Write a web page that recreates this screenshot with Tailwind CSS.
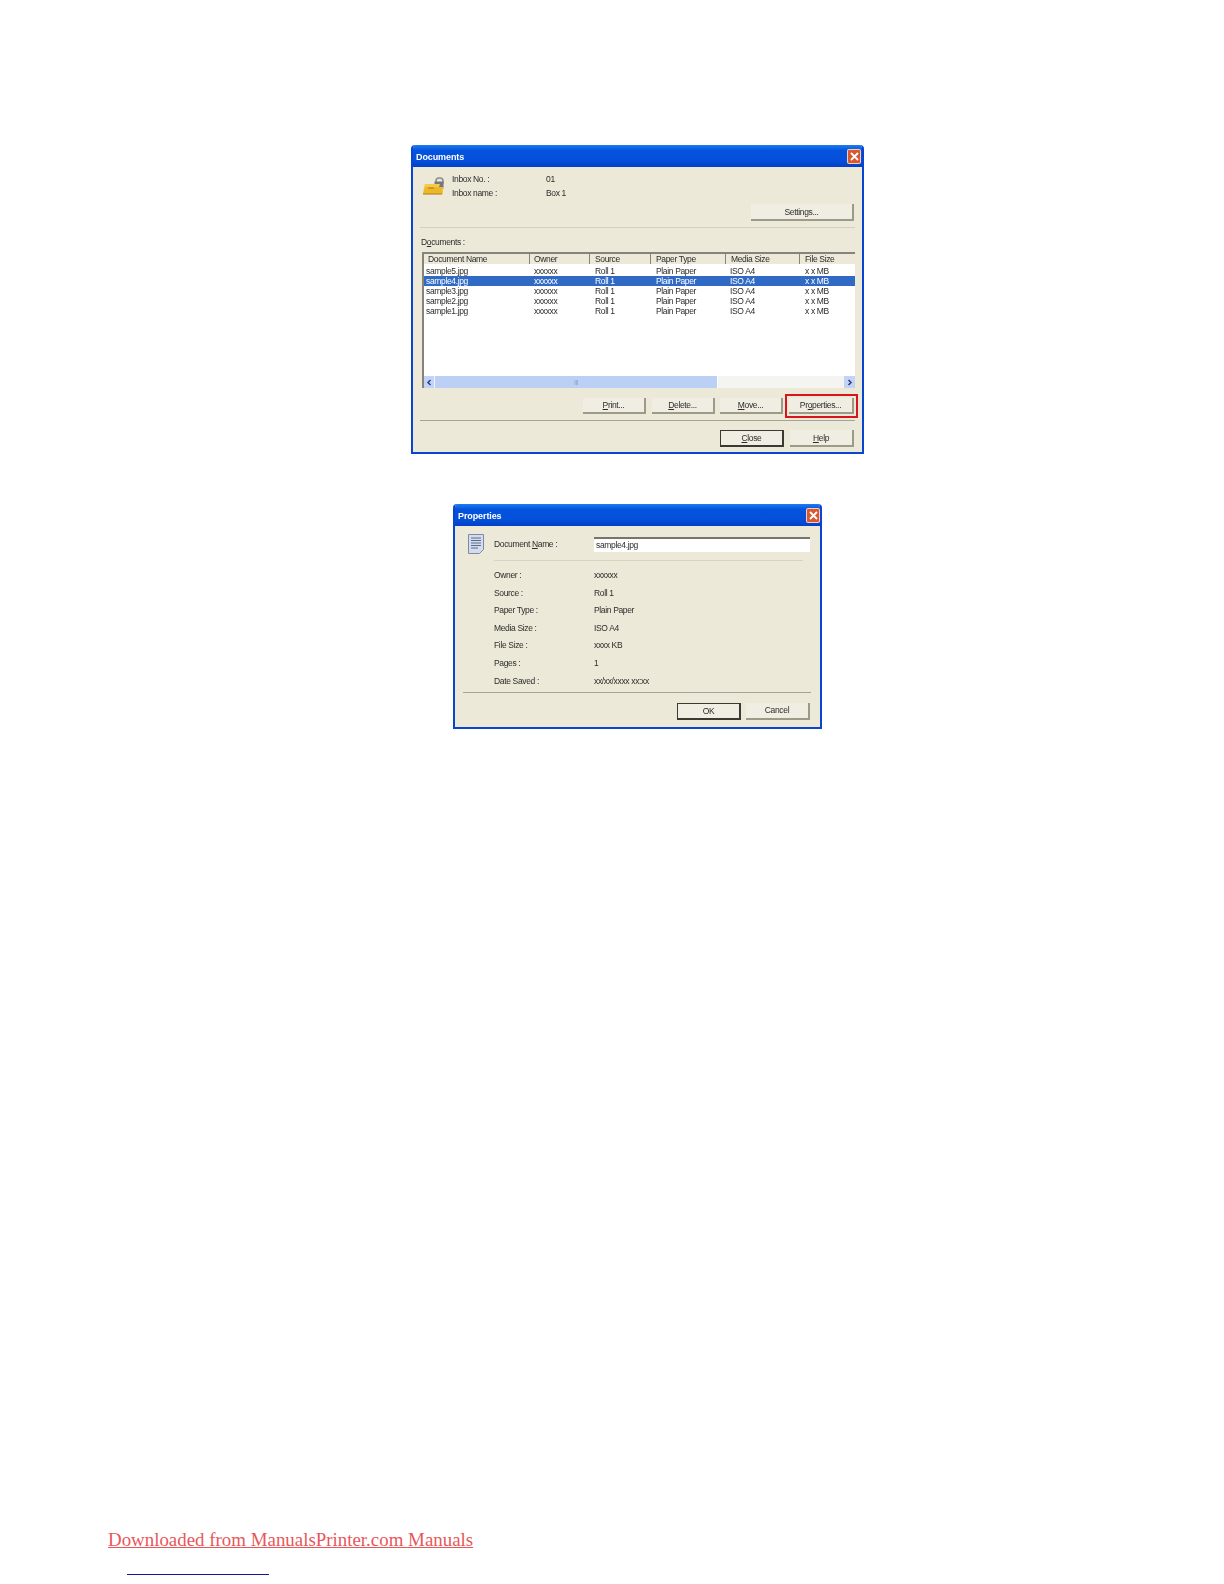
<!DOCTYPE html>
<html lang="en">
<head>
    <meta charset="UTF-8">
    <title>Documents and Properties</title>
    <script src="https://cdn.jsdelivr.net/npm/@tailwindcss/browser@4"></script>
</head>
<body class="bg-white font-['Liberation_Sans',sans-serif] text-[8.500px] leading-[10px] text-[#2c2c2c]">
<div class="h-[1584px] overflow-hidden pt-[145px]">

    <!-- Documents dialog -->
    <div class="relative ml-[411px] flex h-[309px] w-[453px] flex-col overflow-hidden rounded-t-[4px] border-x-2 border-b-2 border-[#0a45d0] bg-[#ece9d8] tracking-[-0.35px] blur-[0.3px]">
        <div class="flex h-[22px] shrink-0 items-center justify-between bg-[linear-gradient(#1f7cf0,#0453dc_25%,#0450dc_70%,#0340c4)] pl-[3px] pr-[1px]">
            <span class="pt-[1px] text-[9px] font-bold tracking-[-0.1px] text-white">Documents</span>
            <span class="flex h-[15px] w-[14px] items-center justify-center rounded-[2px] border border-white/70 bg-[#d9582f]">
                <svg width="9" height="9" viewBox="0 0 9 9"><path d="M1 1l7 7M8 1l-7 7" stroke="#fff" stroke-width="1.8"/></svg>
            </span>
        </div>

        <div class="flex flex-col pl-[7px] pr-[7px]">
            <div class="flex h-[61px] border-b border-[#d3d0bf]">
                <svg class="ml-[2px] mt-[9px]" width="23" height="20" viewBox="0 0 23 20">
                    <rect x="14" y="2" width="7" height="7" rx="3" fill="none" stroke="#8a8a90" stroke-width="1.5"/>
                    <rect x="12.500" y="5.500" width="9" height="7" fill="#77777f"/>
                    <path d="M3 8h15l-1 3h4v7H1l1-7z" fill="#f4cc4a"/>
                    <path d="M1 18l2-7h18l-1 7z" fill="#eeb72a"/>
                    <path d="M6 12h6" stroke="#a87d10"/>
                    <path d="M1 18h19" stroke="#a87d10"/>
                </svg>
                <div class="ml-[7px] mt-[7px] flex flex-col gap-[4px]">
                    <div class="flex"><span class="w-[94px]">Inbox No. :</span><span>01</span></div>
                    <div class="flex"><span class="w-[94px]">Inbox name :</span><span>Box 1</span></div>
                </div>
                <button class="ml-auto mr-[1px] mt-[37px] h-[17px] w-[103px] border-b-2 border-r-2 border-[#9d9a88] bg-[#f0eee2] text-center">Settings...</button>
            </div>

            <div class="ml-[1px] mt-[9px]">D<span class="underline">o</span>cuments :</div>

            <div class="ml-[2px] mt-[5px] w-[433px] border-l-2 border-t-2 border-[#85837a] bg-white">
                <div class="grid h-[10px] grid-cols-[105px_60px_61px_75px_74px_1fr] items-center bg-[#ece9d8]">
                    <span class="pl-[4px]">Document Name</span>
                    <span class="border-l border-[#85837a] pl-[4px]">Owner</span>
                    <span class="border-l border-[#85837a] pl-[5px]">Source</span>
                    <span class="border-l border-[#85837a] pl-[5px]">Paper Type</span>
                    <span class="border-l border-[#85837a] pl-[5px]">Media Size</span>
                    <span class="border-l border-[#85837a] pl-[5px]">File Size</span>
                </div>
                <div class="h-[112px] pt-[2px]">
                    <div class="grid h-[10px] grid-cols-[105px_60px_61px_75px_74px_1fr] items-center"><span class="pl-[2px]">sample5.jpg</span><span class="pl-[5px]">xxxxxx</span><span class="pl-[6px]">Roll 1</span><span class="pl-[6px]">Plain Paper</span><span class="pl-[5px]">ISO A4</span><span class="pl-[6px]">x x MB</span></div>
                    <div class="grid h-[10px] grid-cols-[105px_60px_61px_75px_74px_1fr] items-center bg-[#316ac5] text-white"><span class="pl-[2px]">sample4.jpg</span><span class="pl-[5px]">xxxxxx</span><span class="pl-[6px]">Roll 1</span><span class="pl-[6px]">Plain Paper</span><span class="pl-[5px]">ISO A4</span><span class="pl-[6px]">x x MB</span></div>
                    <div class="grid h-[10px] grid-cols-[105px_60px_61px_75px_74px_1fr] items-center"><span class="pl-[2px]">sample3.jpg</span><span class="pl-[5px]">xxxxxx</span><span class="pl-[6px]">Roll 1</span><span class="pl-[6px]">Plain Paper</span><span class="pl-[5px]">ISO A4</span><span class="pl-[6px]">x x MB</span></div>
                    <div class="grid h-[10px] grid-cols-[105px_60px_61px_75px_74px_1fr] items-center"><span class="pl-[2px]">sample2.jpg</span><span class="pl-[5px]">xxxxxx</span><span class="pl-[6px]">Roll 1</span><span class="pl-[6px]">Plain Paper</span><span class="pl-[5px]">ISO A4</span><span class="pl-[6px]">x x MB</span></div>
                    <div class="grid h-[10px] grid-cols-[105px_60px_61px_75px_74px_1fr] items-center"><span class="pl-[2px]">sample1.jpg</span><span class="pl-[5px]">xxxxxx</span><span class="pl-[6px]">Roll 1</span><span class="pl-[6px]">Plain Paper</span><span class="pl-[5px]">ISO A4</span><span class="pl-[6px]">x x MB</span></div>
                </div>
                <!-- horizontal scrollbar -->
                <div class="flex h-[12px] items-center bg-[#f4f4f0]">
                    <span class="flex h-[12px] w-[10px] items-center justify-center bg-[#c3d3f8]">
                        <svg width="6" height="7" viewBox="0 0 6 7"><path d="M4.500 1L2 3.500 4.500 6" fill="none" stroke="#2a3f80" stroke-width="1.500"/></svg>
                    </span>
                    <span class="ml-[1px] flex h-[12px] w-[283px] items-center justify-center border-r border-white bg-[#bcd0f6] text-[6px] text-[#7f95c8]">|||</span>
                    <span class="ml-auto flex h-[12px] w-[11px] items-center justify-center bg-[#c3d3f8]">
                        <svg width="6" height="7" viewBox="0 0 6 7"><path d="M1.500 1L4 3.500 1.500 6" fill="none" stroke="#2a3f80" stroke-width="1.500"/></svg>
                    </span>
                </div>
            </div>

            <div class="mt-[10px] flex h-[16px] justify-end pr-[1px]">
                <button class="h-[16px] w-[63px] border-b-2 border-r-2 border-[#9d9a88] bg-[#f0eee2]"><span class="underline">P</span>rint...</button>
                <button class="ml-[6px] h-[16px] w-[63px] border-b-2 border-r-2 border-[#9d9a88] bg-[#f0eee2]"><span class="underline">D</span>elete...</button>
                <button class="ml-[5px] h-[16px] w-[63px] border-b-2 border-r-2 border-[#9d9a88] bg-[#f0eee2]"><span class="underline">M</span>ove...</button>
                <button class="ml-[6px] h-[16px] w-[65px] border-b-2 border-r-2 border-[#9d9a88] bg-[#f0eee2] outline-2 outline-offset-[2px] outline-[#d8141c]">Pr<span class="underline">o</span>perties...</button>
            </div>

            <div class="mt-[6px] h-[1px] bg-[#a5a396]"></div>

            <div class="mt-[9px] flex justify-end pr-[1px]">
                <button class="h-[17px] w-[64px] border border-b-2 border-r-2 border-[#3a3a34] bg-[#f0eee2]"><span class="underline">C</span>lose</button>
                <button class="ml-[6px] h-[17px] w-[64px] border-b-2 border-r-2 border-[#9d9a88] bg-[#f0eee2]"><span class="underline">H</span>elp</button>
            </div>
        </div>
    </div>

    <!-- Properties dialog -->
    <div class="ml-[453px] mt-[50px] flex h-[225px] w-[369px] flex-col overflow-hidden rounded-t-[4px] border-x-2 border-b-2 border-[#0a45d0] bg-[#ece9d8] tracking-[-0.35px] blur-[0.3px]">
        <div class="flex h-[22px] shrink-0 items-center justify-between bg-[linear-gradient(#1f7cf0,#0453dc_25%,#0450dc_70%,#0340c4)] pl-[3px] pr-[0px]">
            <span class="pt-[1px] text-[9px] font-bold tracking-[-0.1px] text-white">Properties</span>
            <span class="flex h-[15px] w-[14px] items-center justify-center rounded-[2px] border border-white/70 bg-[#d9582f]">
                <svg width="9" height="9" viewBox="0 0 9 9"><path d="M1 1l7 7M8 1l-7 7" stroke="#fff" stroke-width="1.8"/></svg>
            </span>
        </div>

        <div class="flex items-center pl-[13px] pt-[8px]">
            <svg width="16" height="20" viewBox="0 0 16 20">
                <path d="M.5 .5h15v15l-4 4h-11z" fill="#d4ddee" stroke="#7c8aa6"/>
                <path d="M3 4h10M3 6.500h10M3 9h10M3 11.500h10M3 14h7" stroke="#5a6b8e"/>
            </svg>
            <span class="ml-[10px] w-[100px]">Document <span class="underline">N</span>ame :</span>
            <div class="flex h-[15px] w-[216px] items-center border-t-2 border-[#77756a] bg-white pl-[2px]">sample4.jpg</div>
        </div>
        <div class="ml-[39px] mt-[6px] h-[1px] w-[309px] bg-[#d6d3c3]"></div>

        <div class="ml-[39px] mt-[9px] grid grid-cols-[100px_1fr] gap-y-[7.600px]">
            <span>Owner :</span><span>xxxxxx</span>
            <span>Source :</span><span>Roll 1</span>
            <span>Paper Type :</span><span>Plain Paper</span>
            <span>Media Size :</span><span>ISO A4</span>
            <span>File Size :</span><span>xxxx KB</span>
            <span>Pages :</span><span>1</span>
            <span>Date Saved :</span><span>xx/xx/xxxx xx:xx</span>
        </div>
        <div class="ml-[8px] mt-[6px] h-[1px] w-[348px] bg-[#a5a396]"></div>

        <div class="mt-[10px] flex justify-end pr-[10px]">
            <button class="h-[17px] w-[64px] border border-b-2 border-r-2 border-[#3a3a34] bg-[#f0eee2]">OK</button>
            <button class="ml-[5px] h-[17px] w-[64px] border-b-2 border-r-2 border-[#9d9a88] bg-[#f0eee2]">Cancel</button>
        </div>
    </div>

    <!-- Footer -->
    <a href="#" class="ml-[108px] mt-[799px] block w-fit font-['Liberation_Serif',serif] text-[18.900px] leading-[24px] text-[#e8565a] underline">Downloaded from ManualsPrinter.com Manuals</a>
    <div class="ml-[127px] mt-[22px] h-[1px] w-[142px] bg-[#1414a0]"></div>
</div>
</body>
</html>
